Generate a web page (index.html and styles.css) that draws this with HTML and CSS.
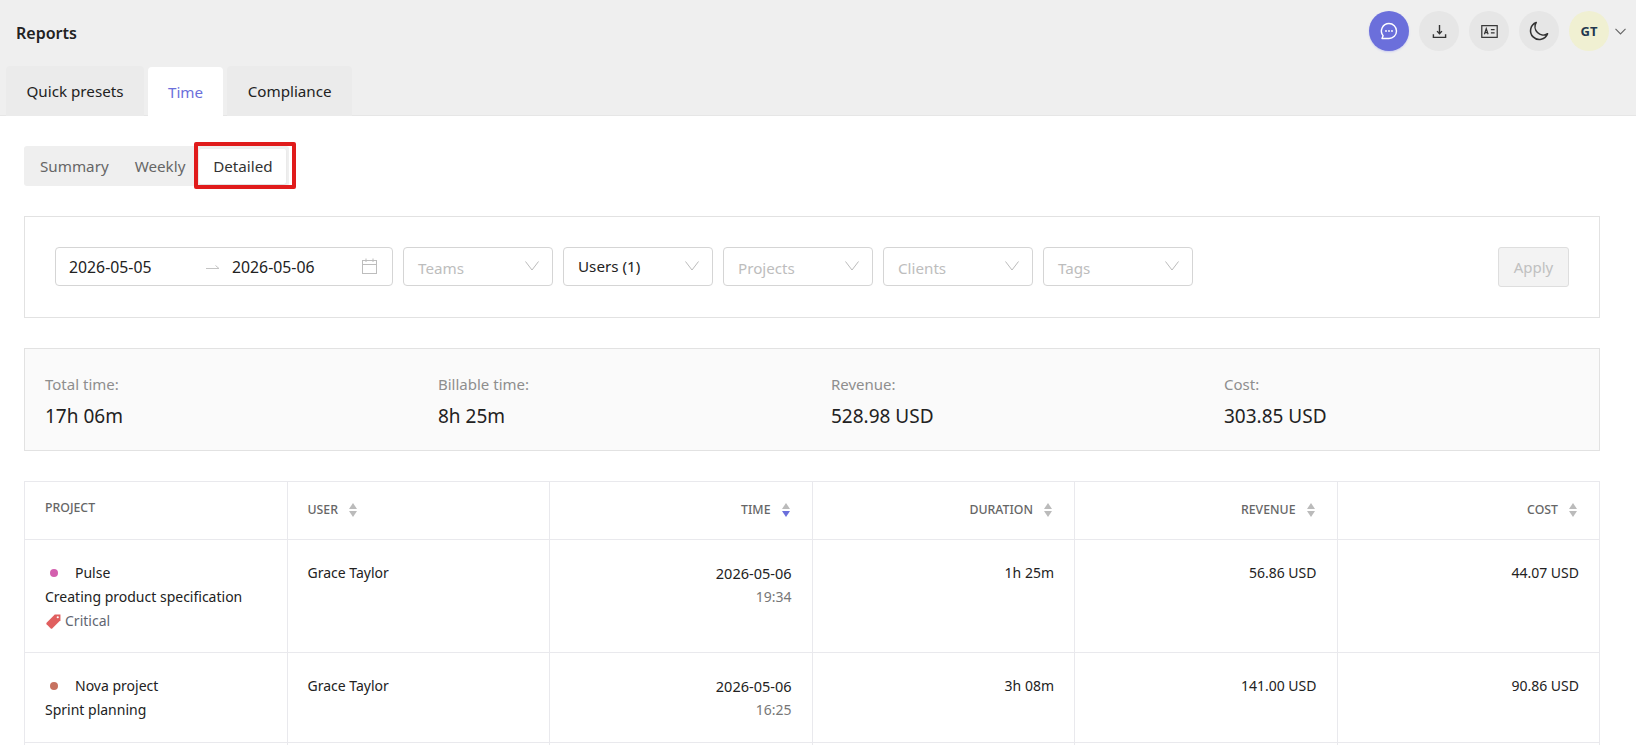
FILE: index.html
```html
<!doctype html>
<html lang="en">
	<head>
		<meta charset="utf-8">
		<meta name="viewport" content="width=device-width, initial-scale=1.0"/>
		<title>Reports</title>
		<link rel="stylesheet" href="styles.css">
	</head>
	<body>
		<header class="top">
			<div class="top-bar">
				<h1>Reports</h1>
				<div class="actions">
					<button class="round chat">
						<svg width="20" height="20" viewBox="0 0 20 20" fill="none" stroke="#fff" stroke-width="1.4"><path d="M10 2.500a7.500 7.500 0 1 1 0 15H3l1.100-2.800A7.500 7.500 0 0 1 10 2.500z" stroke-linejoin="round"/><circle cx="7" cy="10" r=".9" fill="#fff" stroke="none"/><circle cx="10" cy="10" r=".9" fill="#fff" stroke="none"/><circle cx="13" cy="10" r=".9" fill="#fff" stroke="none"/></svg>
					</button>
					<button class="round">
						<svg width="15" height="15" viewBox="0 0 16 16" fill="none" stroke="#333" stroke-width="1.5"><path d="M8 1v9M5.400 7.600 8 10.400l2.600-2.800" /><path d="M1.500 11v3.300h13V11"/></svg>
					</button>
					<button class="round">
						<svg width="17" height="13" viewBox="0 0 18 14" fill="none" stroke="#333" stroke-width="1.3"><rect x=".7" y=".7" width="16.600" height="12.600"/><path d="M3.500 10 5.500 4l2 6M4.200 8.200h2.600M10.500 5h4M10.500 8.500h4"/></svg>
					</button>
					<button class="round">
						<svg width="22" height="22" viewBox="0 0 20 20" fill="none" stroke="#333" stroke-width="1.4"><path d="M7.500 2.200a8 8 0 1 0 10.300 10.300A7.500 7.500 0 0 1 7.500 2.200z" stroke-linejoin="round"/></svg>
					</button>
					<div class="round avatar">GT</div>
					<svg class="caret" width="11" height="7" viewBox="0 0 11 7" fill="none" stroke="#666" stroke-width="1.1"><path d="M.5 .8 5.500 6l5-5.200"/></svg>
				</div>
			</div>
			<nav class="tabs">
				<a class="tab">Quick presets</a>
				<a class="tab active">Time</a>
				<a class="tab">Compliance</a>
			</nav>
		</header>

		<main class="content">
			<div class="segments">
				<span class="segment">Summary</span>
				<span class="segment">Weekly</span>
				<span class="segment active">Detailed</span>
				<span class="highlight"></span>
			</div>

			<section class="filters">
				<div class="field dates">
					<span class="date">2026-05-05</span>
					<svg class="arrow" width="14" height="6" viewBox="0 0 14 6" fill="none" stroke="#c4c4c4"><path d="M0 4.500h13L9.500 1.500"/></svg>
					<span class="date">2026-05-06</span>
					<svg class="cal" width="15" height="16" viewBox="0 0 15 16" fill="none" stroke="#bdbdbd"><rect x=".5" y="2.500" width="14" height="13"/><path d="M.5 6.500h14M4 .5v3.500M11 .5v3.500"/></svg>
				</div>
				<div class="field select empty"><span>Teams</span><svg width="14" height="10" viewBox="0 0 14 10" fill="none" stroke="#bbb"><path d="M.5 .5 7 9l6.500-8.500"/></svg></div>
				<div class="field select"><span>Users (1)</span><svg width="14" height="10" viewBox="0 0 14 10" fill="none" stroke="#bbb"><path d="M.5 .5 7 9l6.500-8.500"/></svg></div>
				<div class="field select empty"><span>Projects</span><svg width="14" height="10" viewBox="0 0 14 10" fill="none" stroke="#bbb"><path d="M.5 .5 7 9l6.500-8.500"/></svg></div>
				<div class="field select empty"><span>Clients</span><svg width="14" height="10" viewBox="0 0 14 10" fill="none" stroke="#bbb"><path d="M.5 .5 7 9l6.500-8.500"/></svg></div>
				<div class="field select empty"><span>Tags</span><svg width="14" height="10" viewBox="0 0 14 10" fill="none" stroke="#bbb"><path d="M.5 .5 7 9l6.500-8.500"/></svg></div>
				<button class="apply">Apply</button>
			</section>

			<section class="stats">
				<div class="stat"><div class="stat-label">Total time:</div><div class="stat-value">17h 06m</div></div>
				<div class="stat"><div class="stat-label">Billable time:</div><div class="stat-value">8h 25m</div></div>
				<div class="stat"><div class="stat-label">Revenue:</div><div class="stat-value">528.98 USD</div></div>
				<div class="stat"><div class="stat-label">Cost:</div><div class="stat-value">303.85 USD</div></div>
			</section>

			<table class="report">
				<tr>
					<th class="project-head">PROJECT</th>
					<th><span class="sorted">USER <i class="sort"></i></span></th>
					<th class="right"><span class="sorted">TIME <i class="sort down"></i></span></th>
					<th class="right"><span class="sorted">DURATION <i class="sort"></i></span></th>
					<th class="right"><span class="sorted">REVENUE <i class="sort"></i></span></th>
					<th class="right"><span class="sorted">COST <i class="sort"></i></span></th>
				</tr>
				<tr class="row-tall">
					<td>
						<div class="line"><i class="dot pink"></i>Pulse</div>
						<div class="line">Creating product specification</div>
						<div class="line tag">
							<svg width="17" height="17" viewBox="0 0 16 16"><path d="M9.200 1.500h5.300v5.300l-7.700 7.700a1 1 0 0 1-1.400 0L1.500 10.600a1 1 0 0 1 0-1.400z" fill="#e05f5f"/><circle cx="12" cy="4" r="1" fill="#fff"/></svg>
							Critical
						</div>
					</td>
					<td>Grace Taylor</td>
					<td class="right"><div class="line day">2026-05-06</div><div class="line muted">19:34</div></td>
					<td class="right">1h 25m</td>
					<td class="right">56.86 USD</td>
					<td class="right">44.07 USD</td>
				</tr>
				<tr class="row-short">
					<td>
						<div class="line"><i class="dot brown"></i>Nova project</div>
						<div class="line">Sprint planning</div>
					</td>
					<td>Grace Taylor</td>
					<td class="right"><div class="line day">2026-05-06</div><div class="line muted">16:25</div></td>
					<td class="right">3h 08m</td>
					<td class="right">141.00 USD</td>
					<td class="right">90.86 USD</td>
				</tr>
				<tr class="row-stub"><td></td><td></td><td></td><td></td><td></td><td></td></tr>
			</table>
		</main>
	</body>
</html>
```

FILE: styles.css
```css
/*----- Reset -----*/

*{
	box-sizing: border-box;
}

html, body{
	height: 100%;
	margin: 0;
	padding: 0;
	overflow: hidden;
	background: #fff;
	color: #222;
	font-family: "Noto Sans", "Open Sans", sans-serif;
	font-size: 14px;
}

button{
	font-family: inherit;
	border: 0;
	padding: 0;
}

/*----- Header -----*/

.top{
	height: 116px;
	background: #efefef;
	border-bottom: 1px solid #e6e6e6;
	padding-left: 6px;
}

.top-bar{
	display: flex;
	align-items: center;
	justify-content: space-between;
	height: 66px;
	padding: 0 10px 4px 10px;
}

.top-bar h1{
	margin: 3px 0 0;
	font-size: 16px;
	font-weight: 600;
	color: #222;
}

.actions{
	display: flex;
	align-items: center;
	gap: 10px;
}

.round{
	display: flex;
	align-items: center;
	justify-content: center;
	width: 40px;
	height: 40px;
	border-radius: 50%;
	background: #e6e6e6;
}

.chat{
	background: #6b6fdb;
	box-shadow: 0 1px 2px #c9cbf0;
}

.avatar{
	background: #f0f0d2;
	color: #23384f;
	font-size: 13px;
	font-weight: 700;
}

.caret{
	margin-left: -4px;
}

/*----- Tabs -----*/

.tabs{
	display: flex;
	gap: 4px;
}

.tab{
	height: 50px;
	line-height: 51px;
	padding: 0 20.500px;
	background: #ebebeb;
	border-radius: 4px 4px 0 0;
	font-size: 15.200px;
	color: #222;
}

.tab.active{
	height: 51px;
	margin-top: 1px;
	padding: 0 20px;
	background: #fff;
	color: #6b6fdb;
}

/*----- Page -----*/

.content{
	padding: 30px 36px 0 24px;
}

.segments{
	position: relative;
	display: inline-flex;
	align-items: center;
	height: 40px;
	padding: 0 3px 0 0;
	background: #efefef;
	border-radius: 3px;
}

.segment{
	padding: 0 14px 0 16px;
	font-size: 15.200px;
	color: #666;
}

.segment:nth-child(2){
	padding: 0 14px 0 12px;
}

.segment.active{
	display: flex;
	align-items: center;
	justify-content: center;
	width: 87px;
	height: 35px;
	padding: 0;
	background: #fff;
	border-radius: 2px;
	box-shadow: 0 1px 2px #dcdcdc;
	color: #333;
}

.highlight{
	position: absolute;
	left: 170px;
	top: -4px;
	width: 102px;
	height: 47px;
	border: 4px solid #e01b1b;
	border-radius: 2px;
}

/*----- Filters -----*/

.filters{
	display: flex;
	align-items: center;
	height: 102px;
	margin-top: 30px;
	padding: 0 30px 2px 30px;
	border: 1px solid #e2e2e2;
}

.field{
	display: flex;
	align-items: center;
	height: 39px;
	margin-right: 10px;
	background: #fff;
	border: 1px solid #d5d5d5;
	border-radius: 4px;
}

.dates{
	width: 338px;
	padding: 1px 15px 0 13px;
}

.date{
	width: 83px;
	font-size: 15.800px;
	color: #222;
}

.arrow{
	margin: 0 12px 0 54px;
}

.cal{
	margin: -2px 0 0 auto;
}

.select{
	justify-content: space-between;
	width: 150px;
	padding: 0 13px 0 14px;
	font-size: 15.200px;
	color: #222;
}

.select.empty{
	color: #bdbdbd;
}

.select.empty span{
	margin-top: 3px;
}

.apply{
	width: 71px;
	height: 40px;
	margin: 2px 0 0 auto;
	background: #f3f3f3;
	border: 1px solid #dedede;
	border-radius: 3px;
	font-size: 15px;
	color: #c0c0c0;
}

/*----- Stats -----*/

.stats{
	display: flex;
	height: 103px;
	margin-top: 30px;
	padding: 25px 0 0 20px;
	background: #fafafa;
	border: 1px solid #e2e2e2;
}

.stat{
	flex: 0 0 393px;
}

.stat-label{
	color: #8e8e8e;
	font-size: 15px;
	line-height: 20px;
}

.stat-value{
	margin-top: 10px;
	font-size: 19px;
	line-height: 24px;
	color: #222;
}

/*----- Table -----*/

.report{
	width: 100%;
	margin-top: 30px;
	border-collapse: collapse;
	table-layout: fixed;
	font-size: 14px;
}

.report th, .report td{
	border: 1px solid #e9e9ed;
	padding: 0 20px 0 20px;
	text-align: left;
	vertical-align: top;
}

.report th{
	height: 58px;
	padding: 19px 21px 0 20px;
	font-size: 12.300px;
	font-weight: 500;
	color: #666;
}

.report th.project-head{
	padding-top: 17px;
}

.report td{
	padding-top: 21px;
	line-height: 24px;
	color: #222;
}

.report .right{
	text-align: right;
}

.row-tall td{
	height: 113px;
}

.row-short td{
	height: 90px;
}

.row-stub td{
	height: 30px;
}

.line{
	height: 24px;
}

.day{
	font-size: 14.500px;
}

.sorted{
	display: inline-flex;
	align-items: center;
	gap: 11px;
}

.sort{
	position: relative;
	display: inline-block;
	width: 9px;
	height: 14px;
}

.sort::before, .sort::after{
	content: "";
	position: absolute;
	left: 0;
	border-left: 4.500px solid transparent;
	border-right: 4.500px solid transparent;
}

.sort::before{
	top: 0;
	border-bottom: 6px solid #bbb;
}

.sort::after{
	bottom: 0;
	border-top: 6px solid #bbb;
}

.sort.down::after{
	border-top-color: #6b6fdb;
}

.dot{
	display: inline-block;
	width: 8px;
	height: 8px;
	margin: 0 17px 2px 5px;
	border-radius: 50%;
	vertical-align: middle;
}

.pink{
	background: #d35fae;
}

.brown{
	background: #c6715f;
}

.tag{
	display: flex;
	align-items: center;
	gap: 3px;
	color: #5f6672;
}

.muted{
	color: #777;
}
```
